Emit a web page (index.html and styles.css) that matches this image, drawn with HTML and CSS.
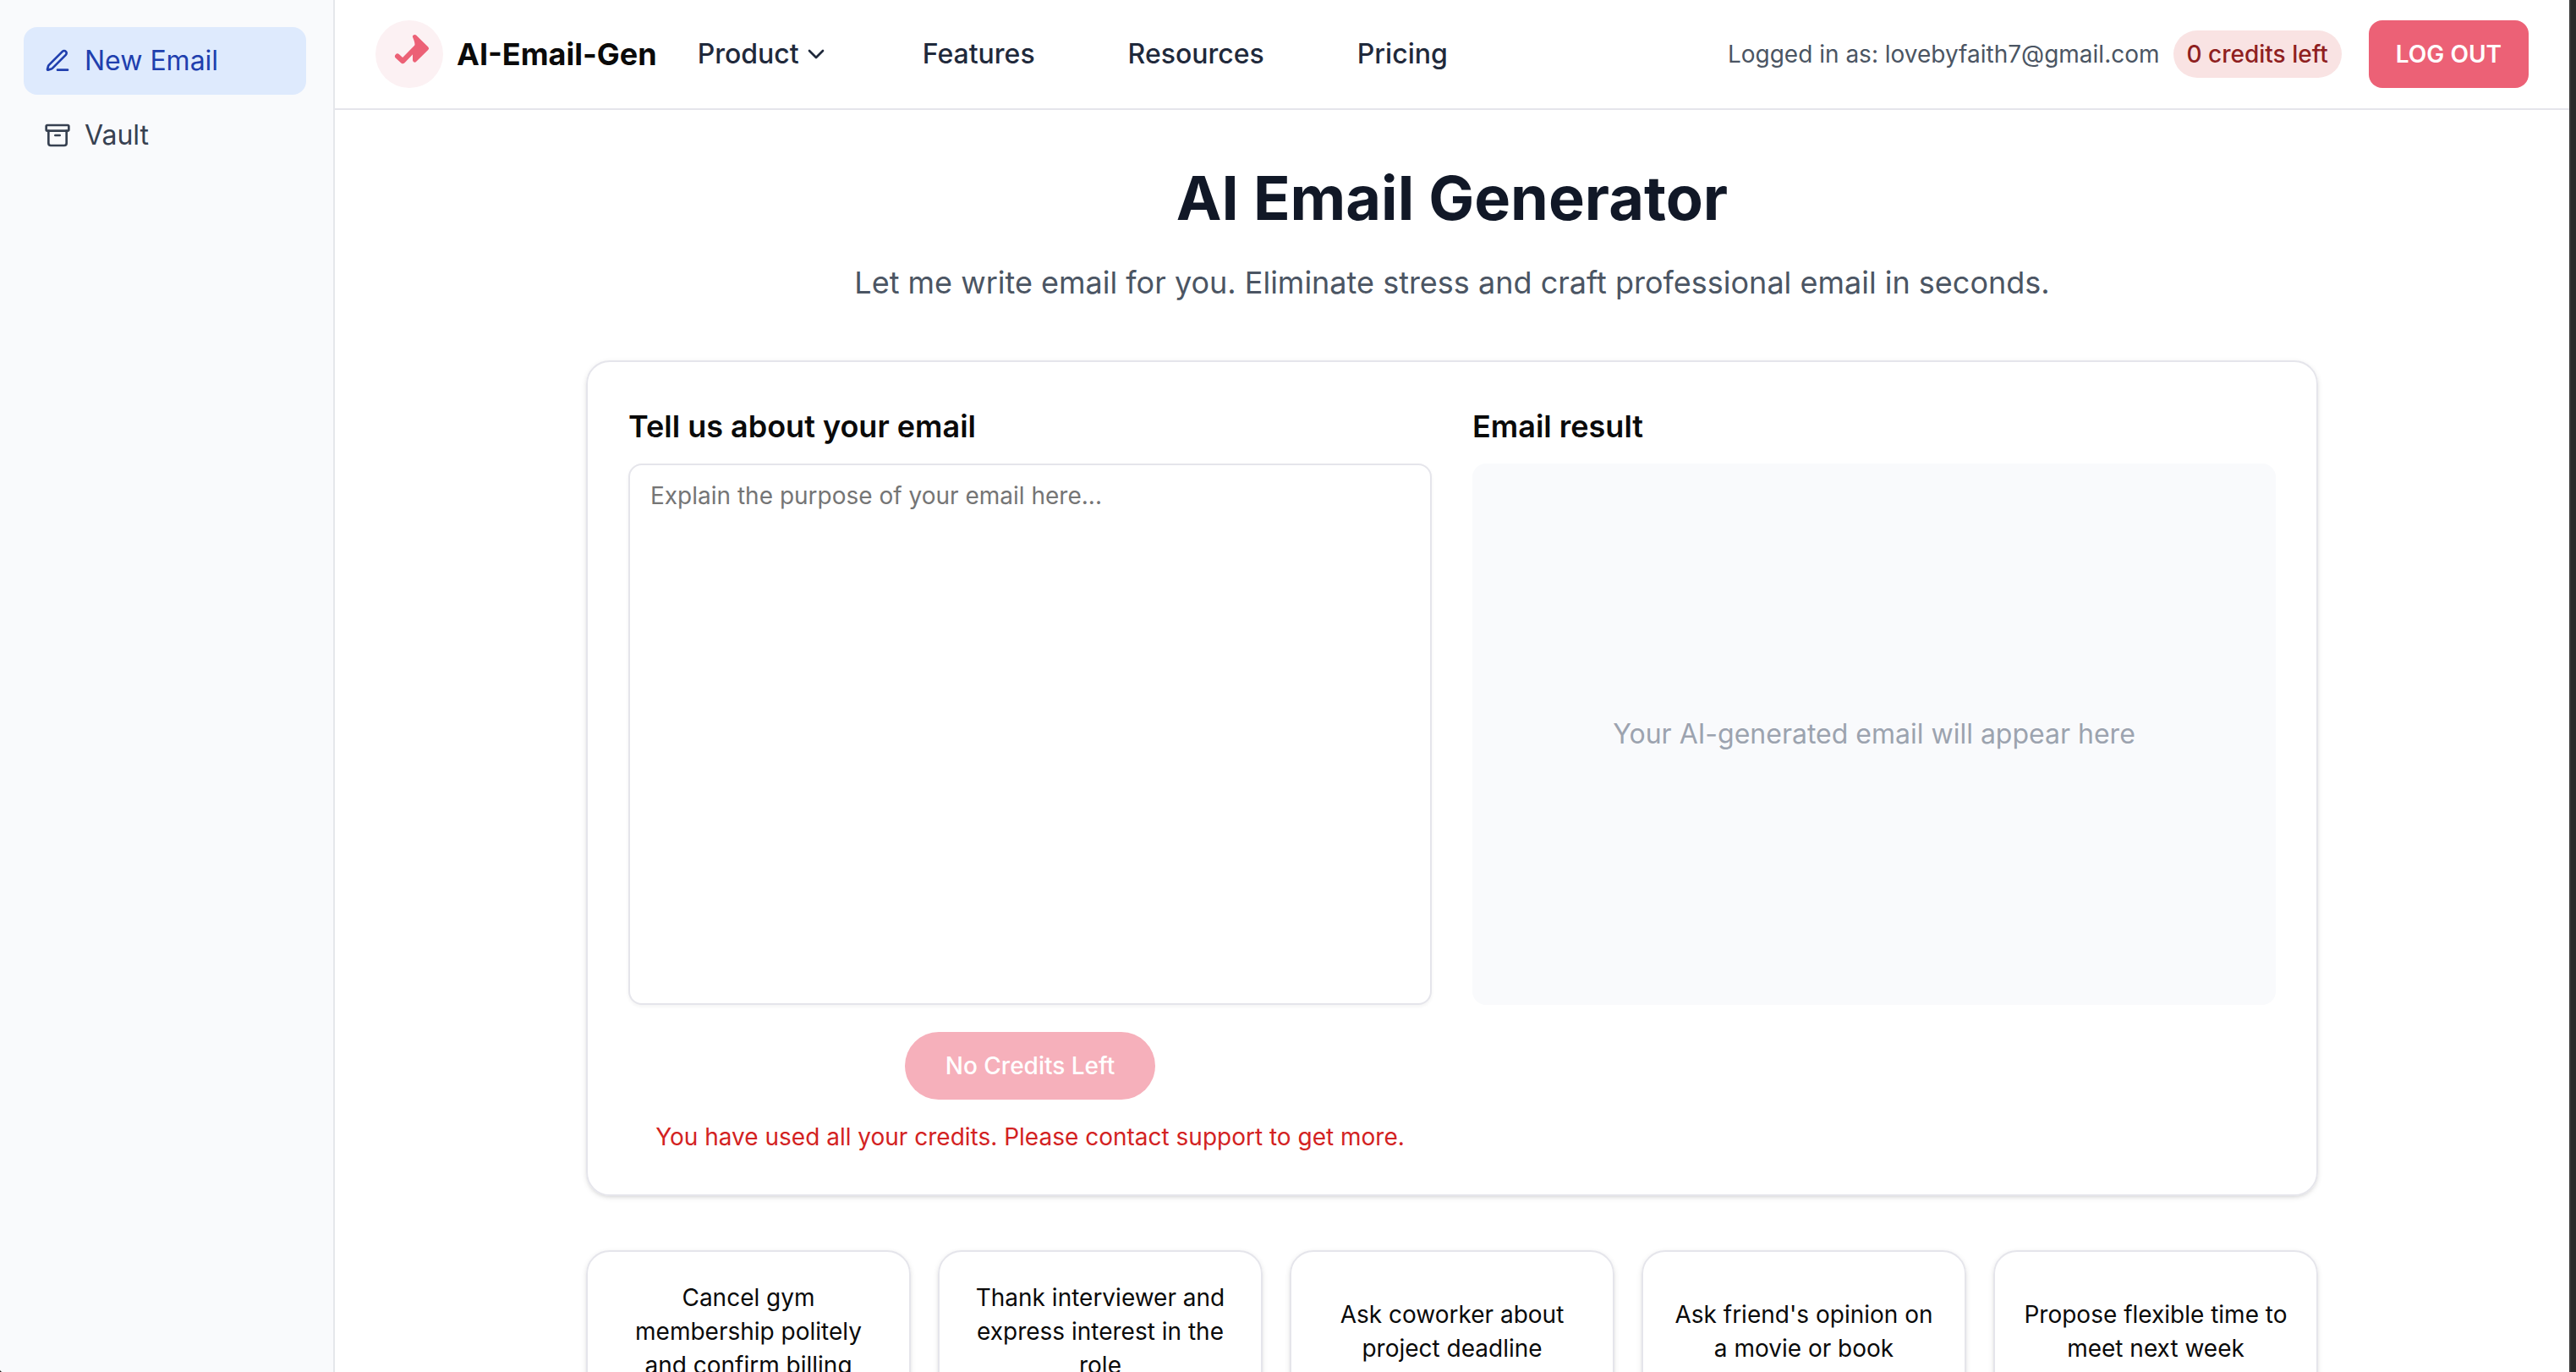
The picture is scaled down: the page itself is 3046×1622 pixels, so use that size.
FILE: index.html
```html
<!DOCTYPE html>
<html lang="en">
<head>
<meta charset="utf-8">
<meta name="viewport" content="width=device-width, initial-scale=1">
<title>AI Email Generator</title>
<link rel="stylesheet" href="styles.css">
</head>
<body>
<div class="app">
  <nav class="sidebar" aria-label="Workspace">
    <a class="side-link side-link-active" href="#new">
      <svg class="icon" viewBox="0 0 24 24" aria-hidden="true"><path d="M12 20h9"/><path d="M16.376 3.622a1 1 0 0 1 3.002 3.002L7.368 18.635a2 2 0 0 1-.855.506l-2.872.838a.5.5 0 0 1-.62-.62l.838-2.872a2 2 0 0 1 .506-.854z"/></svg>
      <span>New Email</span>
    </a>
    <a class="side-link" href="#vault">
      <svg class="icon" viewBox="0 0 24 24" aria-hidden="true"><rect x="2" y="3" width="20" height="5" rx="1"/><path d="M4 8v11a2 2 0 0 0 2 2h12a2 2 0 0 0 2-2V8"/><path d="M10 12h4"/></svg>
      <span>Vault</span>
    </a>
  </nav>
  <div class="content">
    <header class="topbar">
      <a class="brand" href="#home">
        <svg class="logo" viewBox="0 0 80 80" aria-hidden="true"><circle class="logo-disc" cx="40" cy="40" r="40"/><path class="logo-head" d="M46.500 19.500 60.500 33.300 46.500 47V36L49 31Q49.500 26 46.500 19.500Z"/><path class="logo-tail" d="M26 42.500 32.300 48.200 48 32"/></svg>
        <span>AI-Email-Gen</span>
      </a>
      <nav class="menu" aria-label="Main">
        <button class="menu-item" type="button">Product
          <svg class="icon" viewBox="0 0 24 24" aria-hidden="true"><path d="m6 9 6 6 6-6"/></svg>
        </button>
        <a class="menu-item" href="#features">Features</a>
        <a class="menu-item" href="#resources">Resources</a>
        <a class="menu-item" href="#pricing">Pricing</a>
      </nav>
      <div class="account">
        <div class="user">
          <span>Logged in as: lovebyfaith7@gmail.com</span>
          <span class="credits">0 credits left</span>
        </div>
        <button class="logout" type="button">LOG OUT</button>
      </div>
    </header>
    <main class="page">
      <h1 class="title">AI Email Generator</h1>
      <p class="subtitle">Let me write email for you. Eliminate stress and craft professional email in seconds.</p>
      <section class="panel">
        <form class="column">
          <label class="heading" for="purpose">Tell us about your email</label>
          <textarea class="purpose" id="purpose" placeholder="Explain the purpose of your email here..."></textarea>
          <button class="generate" type="submit" disabled>No Credits Left</button>
          <p class="warning">You have used all your credits. Please contact support to get more.</p>
        </form>
        <div class="column">
          <h2 class="heading">Email result</h2>
          <div class="result">Your AI-generated email will appear here</div>
        </div>
      </section>
      <div class="prompts">
        <button class="prompt" type="button">Cancel gym membership politely and confirm billing</button>
        <button class="prompt" type="button">Thank interviewer and express interest in the role</button>
        <button class="prompt" type="button">Ask coworker about project deadline</button>
        <button class="prompt" type="button">Ask friend's opinion on a movie or book</button>
        <button class="prompt" type="button">Propose flexible time to meet next week</button>
      </div>
    </main>
  </div>
  <div class="window-edge"></div>
</div>
</body>
</html>
```
FILE: styles.css
```css
* { box-sizing: border-box; margin: 0; }

html { background: #1c1c1c; }

body {
  font-family: Inter, "Liberation Sans", sans-serif;
  font-size: 28px;
  line-height: 40px;
  color: #0a0a0a;
}

button, textarea { font: inherit; color: inherit; }
button { border: 0; background: none; padding: 0; cursor: pointer; }
a { color: inherit; text-decoration: none; }

.app {
  display: flex;
  height: 100vh;
  overflow: hidden;
  background: #fff;
  border-bottom-left-radius: 4px;
}

.icon {
  width: 32px;
  height: 32px;
  flex: none;
  fill: none;
  stroke: currentColor;
  stroke-width: 2;
  stroke-linecap: round;
  stroke-linejoin: round;
}

.sidebar {
  flex: none;
  width: 396px;
  padding: 32px 32px 32px 28px;
  display: flex;
  flex-direction: column;
  gap: 8px;
  background: #f9fafc;
  border-right: 2px solid #e5e7eb;
}

.side-link {
  display: flex;
  align-items: center;
  gap: 16px;
  padding: 16px 24px;
  border-radius: 16px;
  font-size: 32px;
  line-height: 48px;
  color: #374151;
}

.side-link-active { background: #deeafd; color: #203fae; }

.content {
  flex: 1;
  min-width: 0;
  overflow-y: auto;
  scrollbar-width: none;
}

.window-edge {
  flex: none;
  width: 8px;
  background: #2b2b2b;
  border-left: 2px solid #3a3a3a;
}

.topbar {
  display: flex;
  align-items: center;
  gap: 48px;
  padding: 24px 48px;
  border-bottom: 2px solid #e5e5eb;
}

.brand {
  display: flex;
  align-items: center;
  gap: 16px;
  font-size: 36px;
  font-weight: 700;
}

.logo { width: 80px; height: 80px; }
.logo-disc { fill: #fcf1f3; }
.logo-head { fill: #ec6176; stroke: #ec6176; stroke-width: 5; stroke-linejoin: round; }
.logo-tail { fill: none; stroke: #ec6176; stroke-width: 6; stroke-linecap: round; stroke-linejoin: round; }

.menu {
  display: flex;
  align-items: center;
  gap: 110px;
  font-size: 32px;
  line-height: 48px;
  font-weight: 500;
  color: #1f293b;
}

.menu-item { display: flex; align-items: center; gap: 4px; }

.account {
  margin-left: auto;
  display: flex;
  align-items: center;
  gap: 32px;
}

.user { display: flex; align-items: center; gap: 16px; color: #4b5563; }

.credits {
  padding: 8px 16px;
  border-radius: 28px;
  background: #f9e3e3;
  color: #8f1f1f;
  font-weight: 500;
}

.logout {
  padding: 20px 32px;
  border-radius: 16px;
  background: #ec6176;
  color: #fff;
  font-weight: 600;
}

.page {
  max-width: 2048px;
  margin: 0 auto;
  padding: 64px 0;
}

.title {
  font-size: 72px;
  line-height: 80px;
  font-weight: 700;
  text-align: center;
  color: #111827;
}

.subtitle {
  margin-top: 32px;
  font-size: 36px;
  line-height: 56px;
  text-align: center;
  color: #4b5563;
}

.panel {
  margin-top: 64px;
  display: grid;
  grid-template-columns: 1fr 1fr;
  gap: 48px;
  padding: 48px;
  border: 2px solid #e5e5eb;
  border-radius: 28px;
  box-shadow: 0 2px 6px rgba(0, 0, 0, 0.1), 0 2px 4px -2px rgba(0, 0, 0, 0.1);
}

.column { display: flex; flex-direction: column; }

.heading {
  margin-bottom: 16px;
  font-size: 36px;
  line-height: 56px;
  font-weight: 600;
}

.purpose {
  height: 640px;
  padding: 16px 24px;
  border: 2px solid #e5e5eb;
  border-radius: 16px;
  background: #fff;
  box-shadow: 0 2px 4px rgba(0, 0, 0, 0.05);
  resize: none;
}

.purpose::placeholder { color: #757575; opacity: 1; }

.generate {
  align-self: center;
  margin-top: 32px;
  padding: 20px 48px;
  border-radius: 40px;
  background: #f6b0bb;
  color: #fff;
  font-weight: 500;
}

.warning { margin-top: 24px; text-align: center; color: #d32222; }

.result {
  height: 640px;
  display: flex;
  align-items: center;
  justify-content: center;
  border-radius: 16px;
  background: #f9fafc;
  font-size: 32px;
  color: #9ca3af;
}

.prompts {
  margin-top: 64px;
  display: grid;
  grid-template-columns: repeat(5, 1fr);
  gap: 32px;
}

.prompt {
  min-height: 192px;
  padding: 32px;
  border: 2px solid #e5e5eb;
  border-radius: 28px;
  box-shadow: 0 2px 6px rgba(0, 0, 0, 0.1), 0 2px 4px -2px rgba(0, 0, 0, 0.1);
}
```
